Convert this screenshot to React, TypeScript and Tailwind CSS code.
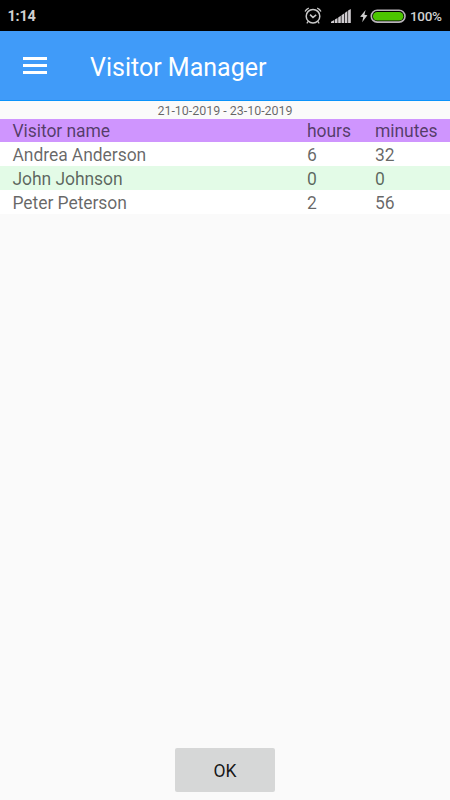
type Visit = {
  name: string;
  hours: string;
  minutes: string;
};

const visits: Visit[] = [
  { name: "Andrea Anderson", hours: "6", minutes: "32" },
  { name: "John Johnson", hours: "0", minutes: "0" },
  { name: "Peter Peterson", hours: "2", minutes: "56" },
];

function AlarmIcon() {
  return (
    <svg width="18" height="18" viewBox="0 0 18 18" fill="none" stroke="#c8c8c8">
      <circle cx="9" cy="9.2" r="6.8" strokeWidth="1.5" />
      <path d="M6 7.6 9 10.4l3.2-2.5" strokeWidth="1.5" />
      <path d="M1.1 4.4Q2.1 2 4.8 1.1M16.9 4.4Q15.9 2 13.2 1.1" strokeWidth="1.4" />
      <path d="M4.4 14.1 2.8 16.3M13.6 14.1l1.6 2.2" strokeWidth="1.2" />
    </svg>
  );
}

function SignalIcon() {
  return (
    <svg width="20" height="14" viewBox="0 0 20 14" fill="#d0ccd0">
      <path d="M0 14v-1.2L3.2 11v3zM3.9 14v-3.6l2.6-1.5V14zM7.2 14V8.5l2.6-1.7V14zM10.5 14V6.3l2.6-1.8V14zM13.8 14V4l2.6-1.9V14zM17.1 14V1.6L19.8 0v14z" />
    </svg>
  );
}

function BatteryIcon() {
  return (
    <svg width="46" height="14" viewBox="0 0 46 14">
      <path d="M5.6 1 .1 7.7l3.1.3-1 5.2 5.2-6.9-3-.5z" fill="#cfcfcf" />
      <rect x="11.3" y="1.3" width="33.7" height="11.8" rx="5.9" fill="#000" stroke="#b9b4b9" strokeWidth="1.6" />
      <rect x="12.9" y="2.9" width="30.5" height="8.6" rx="4.3" fill="#4cc500" />
    </svg>
  );
}

function StatusBar() {
  return (
    <div className="flex h-[31px] items-center bg-black pl-[7.5px] pr-2 text-[#d0d0d0]">
      <span className="pt-[2px] text-[14.5px] font-bold leading-4 tracking-[-0.2px]">1:14</span>
      <div className="ml-auto flex items-center">
        <AlarmIcon />
        <div className="ml-[9px]">
          <SignalIcon />
        </div>
        <div className="ml-[9px]">
          <BatteryIcon />
        </div>
        <span className="ml-[4px] w-[32px] whitespace-nowrap text-[13.5px] font-medium leading-4 tracking-[-0.3px]">
          100%
        </span>
      </div>
    </div>
  );
}

function Toolbar() {
  return (
    <header className="flex h-[70px] items-center border-b border-[#0b93fa] bg-[#409bf9] pl-[23px] text-white">
      <button type="button" aria-label="Menu" className="flex w-6 flex-col gap-1">
        <span className="h-[3px] w-6 bg-white" />
        <span className="h-[3px] w-6 bg-white" />
        <span className="h-[3px] w-6 bg-white" />
      </button>
      <h1 className="ml-[43px] pt-[5px] text-[25px] leading-8">Visitor Manager</h1>
    </header>
  );
}

function VisitTable() {
  return (
    <table className="w-full table-fixed border-collapse text-left text-[17.5px] leading-[22px] tracking-[-0.07px] text-black/60">
      <colgroup>
        <col />
        <col className="w-[68px]" />
        <col className="w-[75px]" />
      </colgroup>
      <thead>
        <tr className="h-[23px] bg-[#cf95fe]">
          <th className="p-0 pl-[12.5px] pt-px font-normal">Visitor name</th>
          <th className="p-0 pt-px font-normal">hours</th>
          <th className="p-0 pt-px font-normal">minutes</th>
        </tr>
      </thead>
      <tbody>
        {visits.map((visit) => (
          <tr key={visit.name} className="h-6 bg-white even:bg-[#e3fbe7]">
            <td className="p-0 pl-[12.5px] pt-[2px]">{visit.name}</td>
            <td className="p-0 pt-[2px]">{visit.hours}</td>
            <td className="p-0 pt-[2px]">{visit.minutes}</td>
          </tr>
        ))}
      </tbody>
    </table>
  );
}

export default function App() {
  return (
    <div className="flex h-[800px] w-[450px] flex-col overflow-hidden bg-[#fafafa] font-[Roboto,sans-serif]">
      <StatusBar />
      <Toolbar />
      <p className="h-[18px] pt-px text-center text-[12.5px] leading-[18px] tracking-[-0.03px] text-black/60">
        21-10-2019 - 23-10-2019
      </p>
      <VisitTable />
      <div className="mt-auto flex justify-center pb-2">
        <button type="button" className="h-[44.5px] w-[100px] rounded-[2px] bg-[#d6d7d7] pt-[2px] text-[17.5px] tracking-[-0.1px] text-black/90">
          OK
        </button>
      </div>
    </div>
  );
}
